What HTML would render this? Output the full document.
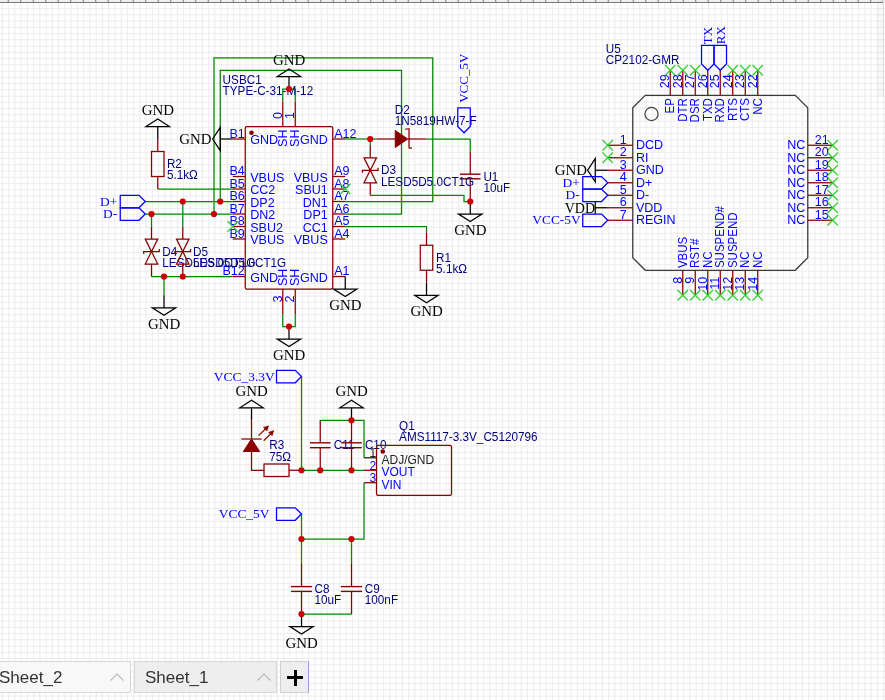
<!DOCTYPE html>
<html><head><meta charset="utf-8"><style>
html,body{margin:0;padding:0;width:885px;height:700px;overflow:hidden;background:#fff;}
#c{position:absolute;left:0;top:0;width:885px;height:700px;will-change:transform;}
.tab{will-change:transform;position:absolute;top:661px;height:30px;border:1px solid #d6d6d6;box-sizing:content-box;font-family:"Liberation Sans",sans-serif;font-size:17px;color:#333;}
.t2{left:-2px;width:131px;background:#f8f8f8;}
.t1{left:134px;width:141px;background:#eeeeee;}
.tt{position:absolute;top:5.5px;}
.t2 .tt{left:0px;}
.t1 .tt{left:10px;}
.car{position:absolute;top:10px;}
.t2 .car{left:110px;}
.t1 .car{left:121px;}
.plus{position:absolute;left:280px;top:661px;width:27px;height:30px;border:1px solid #d0d0d0;border-right-color:#9a9ad8;background:#eeeeee;}
.ph{position:absolute;left:6px;top:14px;width:15.5px;height:2.5px;background:#000;}
.pv{position:absolute;left:12.5px;top:8px;width:3px;height:15.5px;background:#000;}
</style></head><body>
<div id="c"><svg width="885" height="700" viewBox="0 0 885 700"><rect width="885" height="700" fill="#ffffff"/><path d="M2.4 0V700 M8.65 0V700 M14.9 0V700 M21.15 0V700 M27.4 0V700 M33.65 0V700 M39.9 0V700 M46.15 0V700 M52.4 0V700 M58.65 0V700 M64.9 0V700 M71.15 0V700 M77.4 0V700 M83.65 0V700 M89.9 0V700 M96.15 0V700 M102.4 0V700 M108.65 0V700 M114.9 0V700 M121.15 0V700 M127.4 0V700 M133.65 0V700 M139.9 0V700 M146.15 0V700 M152.4 0V700 M158.65 0V700 M164.9 0V700 M171.15 0V700 M177.4 0V700 M183.65 0V700 M189.9 0V700 M196.15 0V700 M202.4 0V700 M208.65 0V700 M214.9 0V700 M221.15 0V700 M227.4 0V700 M233.65 0V700 M239.9 0V700 M246.15 0V700 M252.4 0V700 M258.65 0V700 M264.9 0V700 M271.15 0V700 M277.4 0V700 M283.65 0V700 M289.9 0V700 M296.15 0V700 M302.4 0V700 M308.65 0V700 M314.9 0V700 M321.15 0V700 M327.4 0V700 M333.65 0V700 M339.9 0V700 M346.15 0V700 M352.4 0V700 M358.65 0V700 M364.9 0V700 M371.15 0V700 M377.4 0V700 M383.65 0V700 M389.9 0V700 M396.15 0V700 M402.4 0V700 M408.65 0V700 M414.9 0V700 M421.15 0V700 M427.4 0V700 M433.65 0V700 M439.9 0V700 M446.15 0V700 M452.4 0V700 M458.65 0V700 M464.9 0V700 M471.15 0V700 M477.4 0V700 M483.65 0V700 M489.9 0V700 M496.15 0V700 M502.4 0V700 M508.65 0V700 M514.9 0V700 M521.15 0V700 M527.4 0V700 M533.65 0V700 M539.9 0V700 M546.15 0V700 M552.4 0V700 M558.65 0V700 M564.9 0V700 M571.15 0V700 M577.4 0V700 M583.65 0V700 M589.9 0V700 M596.15 0V700 M602.4 0V700 M608.65 0V700 M614.9 0V700 M621.15 0V700 M627.4 0V700 M633.65 0V700 M639.9 0V700 M646.15 0V700 M652.4 0V700 M658.65 0V700 M664.9 0V700 M671.15 0V700 M677.4 0V700 M683.65 0V700 M689.9 0V700 M696.15 0V700 M702.4 0V700 M708.65 0V700 M714.9 0V700 M721.15 0V700 M727.4 0V700 M733.65 0V700 M739.9 0V700 M746.15 0V700 M752.4 0V700 M758.65 0V700 M764.9 0V700 M771.15 0V700 M777.4 0V700 M783.65 0V700 M789.9 0V700 M796.15 0V700 M802.4 0V700 M808.65 0V700 M814.9 0V700 M821.15 0V700 M827.4 0V700 M833.65 0V700 M839.9 0V700 M846.15 0V700 M852.4 0V700 M858.65 0V700 M864.9 0V700 M871.15 0V700 M877.4 0V700 M883.65 0V700 M0 2.3H885 M0 8.55H885 M0 14.8H885 M0 21.05H885 M0 27.3H885 M0 33.55H885 M0 39.8H885 M0 46.05H885 M0 52.3H885 M0 58.55H885 M0 64.8H885 M0 71.05H885 M0 77.3H885 M0 83.55H885 M0 89.8H885 M0 96.05H885 M0 102.3H885 M0 108.55H885 M0 114.8H885 M0 121.05H885 M0 127.3H885 M0 133.55H885 M0 139.8H885 M0 146.05H885 M0 152.3H885 M0 158.55H885 M0 164.8H885 M0 171.05H885 M0 177.3H885 M0 183.55H885 M0 189.8H885 M0 196.05H885 M0 202.3H885 M0 208.55H885 M0 214.8H885 M0 221.05H885 M0 227.3H885 M0 233.55H885 M0 239.8H885 M0 246.05H885 M0 252.3H885 M0 258.55H885 M0 264.8H885 M0 271.05H885 M0 277.3H885 M0 283.55H885 M0 289.8H885 M0 296.05H885 M0 302.3H885 M0 308.55H885 M0 314.8H885 M0 321.05H885 M0 327.3H885 M0 333.55H885 M0 339.8H885 M0 346.05H885 M0 352.3H885 M0 358.55H885 M0 364.8H885 M0 371.05H885 M0 377.3H885 M0 383.55H885 M0 389.8H885 M0 396.05H885 M0 402.3H885 M0 408.55H885 M0 414.8H885 M0 421.05H885 M0 427.3H885 M0 433.55H885 M0 439.8H885 M0 446.05H885 M0 452.3H885 M0 458.55H885 M0 464.8H885 M0 471.05H885 M0 477.3H885 M0 483.55H885 M0 489.8H885 M0 496.05H885 M0 502.3H885 M0 508.55H885 M0 514.8H885 M0 521.05H885 M0 527.3H885 M0 533.55H885 M0 539.8H885 M0 546.05H885 M0 552.3H885 M0 558.55H885 M0 564.8H885 M0 571.05H885 M0 577.3H885 M0 583.55H885 M0 589.8H885 M0 596.05H885 M0 602.3H885 M0 608.55H885 M0 614.8H885 M0 621.05H885 M0 627.3H885 M0 633.55H885 M0 639.8H885 M0 646.05H885 M0 652.3H885 M0 658.55H885 M0 664.8H885 M0 671.05H885 M0 677.3H885 M0 683.55H885 M0 689.8H885 M0 696.05H885" stroke="#eaeaea" stroke-width="0.9" fill="none"/><rect x="0" y="0" width="883" height="2" fill="#eef0ee"/><line x1="0" y1="2.5" x2="883" y2="2.5" stroke="#7a7a7a" stroke-width="1"/><path d="M8.25 0V2.5 M20.75 0V2.5 M33.25 0V2.5 M45.75 0V2.5 M58.25 0V2.5 M70.75 0V2.5 M83.25 0V2.5 M95.75 0V2.5 M108.25 0V2.5 M120.75 0V2.5 M133.25 0V2.5 M145.75 0V2.5 M158.25 0V2.5 M170.75 0V2.5 M183.25 0V2.5 M195.75 0V2.5 M208.25 0V2.5 M220.75 0V2.5 M233.25 0V2.5 M245.75 0V2.5 M258.25 0V2.5 M270.75 0V2.5 M283.25 0V2.5 M295.75 0V2.5 M308.25 0V2.5 M320.75 0V2.5 M333.25 0V2.5 M345.75 0V2.5 M358.25 0V2.5 M370.75 0V2.5 M383.25 0V2.5 M395.75 0V2.5 M408.25 0V2.5 M420.75 0V2.5 M433.25 0V2.5 M445.75 0V2.5 M458.25 0V2.5 M470.75 0V2.5 M483.25 0V2.5 M495.75 0V2.5 M508.25 0V2.5 M520.75 0V2.5 M533.25 0V2.5 M545.75 0V2.5 M558.25 0V2.5 M570.75 0V2.5 M583.25 0V2.5 M595.75 0V2.5 M608.25 0V2.5 M620.75 0V2.5 M633.25 0V2.5 M645.75 0V2.5 M658.25 0V2.5 M670.75 0V2.5 M683.25 0V2.5 M695.75 0V2.5 M708.25 0V2.5 M720.75 0V2.5 M733.25 0V2.5 M745.75 0V2.5 M758.25 0V2.5 M770.75 0V2.5 M783.25 0V2.5 M795.75 0V2.5 M808.25 0V2.5 M820.75 0V2.5 M833.25 0V2.5 M845.75 0V2.5 M858.25 0V2.5 M870.75 0V2.5 M883.25 0V2.5" stroke="#7a7a7a" stroke-width="1"/><rect x="877.5" y="0" width="6" height="96.7" fill="#000000" fill-opacity="0.03"/><line x1="883.5" y1="0" x2="883.5" y2="96.7" stroke="#dde2dd" stroke-width="1"/>
<polyline points="282.75,101.5 282.75,89 295.25,89 295.25,101.5" stroke="#008800" stroke-width="1.25" fill="none"/>
<polyline points="282.75,314 282.75,326.5 295.25,326.5 295.25,314" stroke="#008800" stroke-width="1.25" fill="none"/>
<polyline points="157.75,189 232.75,189" stroke="#008800" stroke-width="1.25" fill="none"/>
<polyline points="145.25,201.5 232.75,201.5" stroke="#008800" stroke-width="1.25" fill="none"/>
<polyline points="145.25,214 232.75,214" stroke="#008800" stroke-width="1.25" fill="none"/>
<polyline points="182.75,201.5 182.75,226.5" stroke="#008800" stroke-width="1.25" fill="none"/>
<polyline points="151.5,214 151.5,226.5" stroke="#008800" stroke-width="1.25" fill="none"/>
<polyline points="151.5,276.5 232.75,276.5" stroke="#008800" stroke-width="1.25" fill="none"/>
<polyline points="164,276.5 164,295.25" stroke="#008800" stroke-width="1.25" fill="none"/>
<polyline points="345.25,201.5 432.75,201.5 432.75,57.75 214,57.75 214,214" stroke="#008800" stroke-width="1.25" fill="none"/>
<polyline points="345.25,214 401.5,214 401.5,70.25 220.25,70.25 220.25,201.5" stroke="#008800" stroke-width="1.25" fill="none"/>
<polyline points="345.25,139 376.5,139" stroke="#008800" stroke-width="1.25" fill="none"/>
<polyline points="426.5,139 470.25,139 470.25,151.5" stroke="#008800" stroke-width="1.25" fill="none"/>
<polyline points="370.25,139 370.25,145.25" stroke="#008800" stroke-width="1.25" fill="none"/>
<polyline points="370.25,195.25 464,195.25 464,201.5 470.25,201.5" stroke="#008800" stroke-width="1.25" fill="none"/>
<polyline points="345.25,226.5 426.5,226.5 426.5,232.75" stroke="#008800" stroke-width="1.25" fill="none"/>
<polyline points="301.5,376.5 301.5,470.25" stroke="#008800" stroke-width="1.25" fill="none"/>
<polyline points="301.5,470.25 364,470.25" stroke="#008800" stroke-width="1.25" fill="none"/>
<polyline points="320.25,420.25 364,420.25 364,457.75" stroke="#008800" stroke-width="1.25" fill="none"/>
<polyline points="364,482.75 364,539 301.5,539" stroke="#008800" stroke-width="1.25" fill="none"/>
<polyline points="301.5,514 301.5,539" stroke="#008800" stroke-width="1.25" fill="none"/>
<polyline points="301.5,539 301.5,564" stroke="#008800" stroke-width="1.25" fill="none"/>
<polyline points="351.5,539 351.5,564" stroke="#008800" stroke-width="1.25" fill="none"/>
<polyline points="351.5,614 301.5,614" stroke="#008800" stroke-width="1.25" fill="none"/>
<rect x="245.25" y="126.5" width="87.5" height="162.5" rx="1.6" stroke="#880000" stroke-width="1.25" fill="none"/>
<circle cx="251.5" cy="132.75" r="2.3" fill="#880000"/>
<line x1="232.75" y1="139" x2="245.25" y2="139" stroke="#880000" stroke-width="1.25"/>
<text transform="translate(244.75,137.5) scale(0.98,1)" fill="#0000ff" font-size="12.8" font-family='"Liberation Sans", sans-serif' text-anchor="end">B1</text>
<text transform="translate(250.25,144) scale(0.98,1)" fill="#0000ff" font-size="12.8" font-family='"Liberation Sans", sans-serif' text-anchor="start">GND</text>
<line x1="232.75" y1="176.5" x2="245.25" y2="176.5" stroke="#880000" stroke-width="1.25"/>
<text transform="translate(244.75,175) scale(0.98,1)" fill="#0000ff" font-size="12.8" font-family='"Liberation Sans", sans-serif' text-anchor="end">B4</text>
<text transform="translate(250.25,181.5) scale(0.98,1)" fill="#0000ff" font-size="12.8" font-family='"Liberation Sans", sans-serif' text-anchor="start">VBUS</text>
<line x1="232.75" y1="189" x2="245.25" y2="189" stroke="#880000" stroke-width="1.25"/>
<text transform="translate(244.75,187.5) scale(0.98,1)" fill="#0000ff" font-size="12.8" font-family='"Liberation Sans", sans-serif' text-anchor="end">B5</text>
<text transform="translate(250.25,194) scale(0.98,1)" fill="#0000ff" font-size="12.8" font-family='"Liberation Sans", sans-serif' text-anchor="start">CC2</text>
<line x1="232.75" y1="201.5" x2="245.25" y2="201.5" stroke="#880000" stroke-width="1.25"/>
<text transform="translate(244.75,200) scale(0.98,1)" fill="#0000ff" font-size="12.8" font-family='"Liberation Sans", sans-serif' text-anchor="end">B6</text>
<text transform="translate(250.25,206.5) scale(0.98,1)" fill="#0000ff" font-size="12.8" font-family='"Liberation Sans", sans-serif' text-anchor="start">DP2</text>
<line x1="232.75" y1="214" x2="245.25" y2="214" stroke="#880000" stroke-width="1.25"/>
<text transform="translate(244.75,212.5) scale(0.98,1)" fill="#0000ff" font-size="12.8" font-family='"Liberation Sans", sans-serif' text-anchor="end">B7</text>
<text transform="translate(250.25,219) scale(0.98,1)" fill="#0000ff" font-size="12.8" font-family='"Liberation Sans", sans-serif' text-anchor="start">DN2</text>
<line x1="232.75" y1="226.5" x2="245.25" y2="226.5" stroke="#880000" stroke-width="1.25"/>
<text transform="translate(244.75,225) scale(0.98,1)" fill="#0000ff" font-size="12.8" font-family='"Liberation Sans", sans-serif' text-anchor="end">B8</text>
<text transform="translate(250.25,231.5) scale(0.98,1)" fill="#0000ff" font-size="12.8" font-family='"Liberation Sans", sans-serif' text-anchor="start">SBU2</text>
<line x1="232.75" y1="239" x2="245.25" y2="239" stroke="#880000" stroke-width="1.25"/>
<text transform="translate(244.75,237.5) scale(0.98,1)" fill="#0000ff" font-size="12.8" font-family='"Liberation Sans", sans-serif' text-anchor="end">B9</text>
<text transform="translate(250.25,244) scale(0.98,1)" fill="#0000ff" font-size="12.8" font-family='"Liberation Sans", sans-serif' text-anchor="start">VBUS</text>
<line x1="232.75" y1="276.5" x2="245.25" y2="276.5" stroke="#880000" stroke-width="1.25"/>
<text transform="translate(244.75,275) scale(0.98,1)" fill="#0000ff" font-size="12.8" font-family='"Liberation Sans", sans-serif' text-anchor="end">B12</text>
<text transform="translate(250.25,281.5) scale(0.98,1)" fill="#0000ff" font-size="12.8" font-family='"Liberation Sans", sans-serif' text-anchor="start">GND</text>
<line x1="332.75" y1="139" x2="345.25" y2="139" stroke="#880000" stroke-width="1.25"/>
<text transform="translate(334.25,137.5) scale(0.98,1)" fill="#0000ff" font-size="12.8" font-family='"Liberation Sans", sans-serif' text-anchor="start">A12</text>
<text transform="translate(327.75,144.2) scale(0.98,1)" fill="#0000ff" font-size="12.8" font-family='"Liberation Sans", sans-serif' text-anchor="end">GND</text>
<line x1="332.75" y1="176.5" x2="345.25" y2="176.5" stroke="#880000" stroke-width="1.25"/>
<text transform="translate(334.25,175) scale(0.98,1)" fill="#0000ff" font-size="12.8" font-family='"Liberation Sans", sans-serif' text-anchor="start">A9</text>
<text transform="translate(327.75,181.7) scale(0.98,1)" fill="#0000ff" font-size="12.8" font-family='"Liberation Sans", sans-serif' text-anchor="end">VBUS</text>
<line x1="332.75" y1="189" x2="345.25" y2="189" stroke="#880000" stroke-width="1.25"/>
<text transform="translate(334.25,187.5) scale(0.98,1)" fill="#0000ff" font-size="12.8" font-family='"Liberation Sans", sans-serif' text-anchor="start">A8</text>
<text transform="translate(327.75,194.2) scale(0.98,1)" fill="#0000ff" font-size="12.8" font-family='"Liberation Sans", sans-serif' text-anchor="end">SBU1</text>
<line x1="332.75" y1="201.5" x2="345.25" y2="201.5" stroke="#880000" stroke-width="1.25"/>
<text transform="translate(334.25,200) scale(0.98,1)" fill="#0000ff" font-size="12.8" font-family='"Liberation Sans", sans-serif' text-anchor="start">A7</text>
<text transform="translate(327.75,206.7) scale(0.98,1)" fill="#0000ff" font-size="12.8" font-family='"Liberation Sans", sans-serif' text-anchor="end">DN1</text>
<line x1="332.75" y1="214" x2="345.25" y2="214" stroke="#880000" stroke-width="1.25"/>
<text transform="translate(334.25,212.5) scale(0.98,1)" fill="#0000ff" font-size="12.8" font-family='"Liberation Sans", sans-serif' text-anchor="start">A6</text>
<text transform="translate(327.75,219.2) scale(0.98,1)" fill="#0000ff" font-size="12.8" font-family='"Liberation Sans", sans-serif' text-anchor="end">DP1</text>
<line x1="332.75" y1="226.5" x2="345.25" y2="226.5" stroke="#880000" stroke-width="1.25"/>
<text transform="translate(334.25,225) scale(0.98,1)" fill="#0000ff" font-size="12.8" font-family='"Liberation Sans", sans-serif' text-anchor="start">A5</text>
<text transform="translate(327.75,231.7) scale(0.98,1)" fill="#0000ff" font-size="12.8" font-family='"Liberation Sans", sans-serif' text-anchor="end">CC1</text>
<line x1="332.75" y1="239" x2="345.25" y2="239" stroke="#880000" stroke-width="1.25"/>
<text transform="translate(334.25,237.5) scale(0.98,1)" fill="#0000ff" font-size="12.8" font-family='"Liberation Sans", sans-serif' text-anchor="start">A4</text>
<text transform="translate(327.75,244.2) scale(0.98,1)" fill="#0000ff" font-size="12.8" font-family='"Liberation Sans", sans-serif' text-anchor="end">VBUS</text>
<line x1="332.75" y1="276.5" x2="345.25" y2="276.5" stroke="#880000" stroke-width="1.25"/>
<text transform="translate(334.25,275) scale(0.98,1)" fill="#0000ff" font-size="12.8" font-family='"Liberation Sans", sans-serif' text-anchor="start">A1</text>
<text transform="translate(327.75,281.7) scale(0.98,1)" fill="#0000ff" font-size="12.8" font-family='"Liberation Sans", sans-serif' text-anchor="end">GND</text>
<line x1="282.75" y1="101.5" x2="282.75" y2="126.5" stroke="#880000" stroke-width="1.25"/>
<text transform="translate(281.55,119) rotate(-90) scale(0.98,1)" fill="#0000ff" font-size="12.8" font-family='"Liberation Sans", sans-serif' text-anchor="start">0</text>
<text transform="translate(286.65,129.5) rotate(-90) scale(0.98,1)" fill="#0000ff" font-size="12.8" font-family='"Liberation Sans", sans-serif' text-anchor="end">SH</text>
<line x1="295.25" y1="101.5" x2="295.25" y2="126.5" stroke="#880000" stroke-width="1.25"/>
<text transform="translate(294.05,119) rotate(-90) scale(0.98,1)" fill="#0000ff" font-size="12.8" font-family='"Liberation Sans", sans-serif' text-anchor="start">1</text>
<text transform="translate(299.15,129.5) rotate(-90) scale(0.98,1)" fill="#0000ff" font-size="12.8" font-family='"Liberation Sans", sans-serif' text-anchor="end">SH</text>
<line x1="282.75" y1="289" x2="282.75" y2="314" stroke="#880000" stroke-width="1.25"/>
<text transform="translate(281.55,295.5) rotate(-90) scale(0.98,1)" fill="#0000ff" font-size="12.8" font-family='"Liberation Sans", sans-serif' text-anchor="end">3</text>
<text transform="translate(286.65,286) rotate(-90) scale(0.98,1)" fill="#0000ff" font-size="12.8" font-family='"Liberation Sans", sans-serif' text-anchor="start">SH</text>
<line x1="295.25" y1="289" x2="295.25" y2="314" stroke="#880000" stroke-width="1.25"/>
<text transform="translate(294.05,295.5) rotate(-90) scale(0.98,1)" fill="#0000ff" font-size="12.8" font-family='"Liberation Sans", sans-serif' text-anchor="end">2</text>
<text transform="translate(299.15,286) rotate(-90) scale(0.98,1)" fill="#0000ff" font-size="12.8" font-family='"Liberation Sans", sans-serif' text-anchor="start">SH</text>
<text transform="translate(222.6,84.4) scale(0.937,1)" fill="#000080" font-size="12.531" font-family='"Liberation Sans", sans-serif' text-anchor="start">USBC1</text>
<text transform="translate(222.6,95.2) scale(0.937,1)" fill="#000080" font-size="12.531" font-family='"Liberation Sans", sans-serif' text-anchor="start">TYPE-C-31-M-12</text>
<line x1="289" y1="89" x2="289" y2="76.5" stroke="#000000" stroke-width="1.25"/>
<polygon points="277.3,76.5 300.7,76.5 289,68.9" stroke="#000000" stroke-width="1.25" fill="none"/>
<text transform="translate(289,64.5)" fill="#000000" font-size="14.9" font-family='"Liberation Serif", serif' text-anchor="middle">GND</text>
<line x1="289" y1="326.5" x2="289" y2="339" stroke="#000000" stroke-width="1.25"/>
<polygon points="277.3,339 300.7,339 289,346.6" stroke="#000000" stroke-width="1.25" fill="none"/>
<text transform="translate(289,360.2)" fill="#000000" font-size="14.9" font-family='"Liberation Serif", serif' text-anchor="middle">GND</text>
<line x1="232.75" y1="139" x2="220.25" y2="139" stroke="#000000" stroke-width="1.25"/>
<polygon points="220.25,127.3 220.25,150.7 212.65,139" stroke="#000000" stroke-width="1.25" fill="none"/>
<text transform="translate(211.45,143.6)" fill="#000000" font-size="14.9" font-family='"Liberation Serif", serif' text-anchor="end">GND</text>
<line x1="345.25" y1="276.5" x2="345.25" y2="289" stroke="#000000" stroke-width="1.25"/>
<polygon points="333.55,289 356.95,289 345.25,296.6" stroke="#000000" stroke-width="1.25" fill="none"/>
<text transform="translate(345.25,310.2)" fill="#000000" font-size="14.9" font-family='"Liberation Serif", serif' text-anchor="middle">GND</text>
<line x1="157.75" y1="139" x2="157.75" y2="151.5" stroke="#880000" stroke-width="1.25"/>
<rect x="151.5" y="151.5" width="12.5" height="25" stroke="#880000" stroke-width="1.25" fill="none"/>
<line x1="157.75" y1="176.5" x2="157.75" y2="189" stroke="#880000" stroke-width="1.25"/>
<line x1="157.75" y1="139" x2="157.75" y2="126.5" stroke="#000000" stroke-width="1.25"/>
<polygon points="146.05,126.5 169.45,126.5 157.75,118.9" stroke="#000000" stroke-width="1.25" fill="none"/>
<text transform="translate(157.75,114.5)" fill="#000000" font-size="14.9" font-family='"Liberation Serif", serif' text-anchor="middle">GND</text>
<text transform="translate(166.9,168.4) scale(0.937,1)" fill="#000080" font-size="12.531" font-family='"Liberation Sans", sans-serif' text-anchor="start">R2</text>
<text transform="translate(166.9,179.2) scale(0.937,1)" fill="#000080" font-size="12.531" font-family='"Liberation Sans", sans-serif' text-anchor="start">5.1kΩ</text>
<polygon points="145.25,201.5 139,195.25 120.25,195.25 120.25,207.75 139,207.75" stroke="#0000ff" stroke-width="1.25" fill="none"/>
<text transform="translate(117.25,205.7)" fill="#0000ff" font-size="13.45" font-family='"Liberation Serif", serif' text-anchor="end">D+</text>
<polygon points="145.25,214 139,207.75 120.25,207.75 120.25,220.25 139,220.25" stroke="#0000ff" stroke-width="1.25" fill="none"/>
<text transform="translate(117.25,218.2)" fill="#0000ff" font-size="13.45" font-family='"Liberation Serif", serif' text-anchor="end">D-</text>
<line x1="151.5" y1="226.5" x2="151.5" y2="239" stroke="#880000" stroke-width="1.25"/>
<polygon points="145.25,239 157.75,239 151.5,251.5" stroke="#880000" stroke-width="1.25" fill="none"/>
<polygon points="145.25,264 157.75,264 151.5,251.5" stroke="#880000" stroke-width="1.25" fill="none"/>
<polyline points="143.7,254 143.7,251.5 159.3,251.5 159.3,249" stroke="#880000" stroke-width="1.25" fill="none" stroke-linejoin="miter"/>
<line x1="151.5" y1="264" x2="151.5" y2="276.5" stroke="#880000" stroke-width="1.25"/>
<text transform="translate(162.3,255.6) scale(0.937,1)" fill="#000080" font-size="12.531" font-family='"Liberation Sans", sans-serif' text-anchor="start">D4</text>
<text transform="translate(162.3,267) scale(0.937,1)" fill="#000080" font-size="12.531" font-family='"Liberation Sans", sans-serif' text-anchor="start">LESD5D5.0CT1G</text>
<line x1="182.75" y1="226.5" x2="182.75" y2="239" stroke="#880000" stroke-width="1.25"/>
<polygon points="176.5,239 189,239 182.75,251.5" stroke="#880000" stroke-width="1.25" fill="none"/>
<polygon points="176.5,264 189,264 182.75,251.5" stroke="#880000" stroke-width="1.25" fill="none"/>
<polyline points="174.95,254 174.95,251.5 190.55,251.5 190.55,249" stroke="#880000" stroke-width="1.25" fill="none" stroke-linejoin="miter"/>
<line x1="182.75" y1="264" x2="182.75" y2="276.5" stroke="#880000" stroke-width="1.25"/>
<text transform="translate(193,255.6) scale(0.937,1)" fill="#000080" font-size="12.531" font-family='"Liberation Sans", sans-serif' text-anchor="start">D5</text>
<text transform="translate(193,267) scale(0.937,1)" fill="#000080" font-size="12.531" font-family='"Liberation Sans", sans-serif' text-anchor="start">LESD5D5.0CT1G</text>
<line x1="164" y1="295.25" x2="164" y2="307.75" stroke="#000000" stroke-width="1.25"/>
<polygon points="152.3,307.75 175.7,307.75 164,315.35" stroke="#000000" stroke-width="1.25" fill="none"/>
<text transform="translate(164,328.95)" fill="#000000" font-size="14.9" font-family='"Liberation Serif", serif' text-anchor="middle">GND</text>
<line x1="227.55" y1="221.3" x2="237.95" y2="231.7" stroke="#33cc33" stroke-width="1.25"/>
<line x1="227.55" y1="231.7" x2="237.95" y2="221.3" stroke="#33cc33" stroke-width="1.25"/>
<line x1="340.05" y1="183.8" x2="350.45" y2="194.2" stroke="#33cc33" stroke-width="1.25"/>
<line x1="340.05" y1="194.2" x2="350.45" y2="183.8" stroke="#33cc33" stroke-width="1.25"/>
<line x1="376.5" y1="139" x2="395.25" y2="139" stroke="#880000" stroke-width="1.25"/>
<polygon points="395.25,130.5 395.25,147.5 407.75,139" stroke="#880000" stroke-width="1.0" fill="#880000"/>
<path d="M 405.15 129.4 Q 405.15 128.8 409.05 128.8 L 409.05 147.8 Q 409.05 148.4 412.05 147.8" stroke="#880000" stroke-width="1.25" fill="none"/>
<line x1="407.75" y1="139" x2="426.5" y2="139" stroke="#880000" stroke-width="1.25"/>
<text transform="translate(394.8,114.4) scale(0.937,1)" fill="#000080" font-size="12.531" font-family='"Liberation Sans", sans-serif' text-anchor="start">D2</text>
<text transform="translate(394.8,124.7) scale(0.937,1)" fill="#000080" font-size="12.531" font-family='"Liberation Sans", sans-serif' text-anchor="start">1N5819HW-7-F</text>
<line x1="470.25" y1="151.5" x2="470.25" y2="174.2" stroke="#880000" stroke-width="1.25"/>
<line x1="459.95" y1="174.2" x2="480.55" y2="174.2" stroke="#880000" stroke-width="1.4"/>
<line x1="459.95" y1="178.8" x2="480.55" y2="178.8" stroke="#880000" stroke-width="1.4"/>
<line x1="470.25" y1="178.8" x2="470.25" y2="201.5" stroke="#880000" stroke-width="1.25"/>
<line x1="470.25" y1="201.5" x2="470.25" y2="214" stroke="#000000" stroke-width="1.25"/>
<polygon points="458.55,214 481.95,214 470.25,221.6" stroke="#000000" stroke-width="1.25" fill="none"/>
<text transform="translate(470.25,235.2)" fill="#000000" font-size="14.9" font-family='"Liberation Serif", serif' text-anchor="middle">GND</text>
<text transform="translate(483.4,180.8) scale(0.937,1)" fill="#000080" font-size="12.531" font-family='"Liberation Sans", sans-serif' text-anchor="start">U1</text>
<text transform="translate(483.4,191.5) scale(0.937,1)" fill="#000080" font-size="12.531" font-family='"Liberation Sans", sans-serif' text-anchor="start">10uF</text>
<line x1="370.25" y1="145.25" x2="370.25" y2="157.75" stroke="#880000" stroke-width="1.25"/>
<polygon points="364,157.75 376.5,157.75 370.25,170.25" stroke="#880000" stroke-width="1.25" fill="none"/>
<polygon points="364,182.75 376.5,182.75 370.25,170.25" stroke="#880000" stroke-width="1.25" fill="none"/>
<polyline points="362.45,172.75 362.45,170.25 378.05,170.25 378.05,167.75" stroke="#880000" stroke-width="1.25" fill="none" stroke-linejoin="miter"/>
<line x1="370.25" y1="182.75" x2="370.25" y2="195.25" stroke="#880000" stroke-width="1.25"/>
<text transform="translate(381,173.9) scale(0.937,1)" fill="#000080" font-size="12.531" font-family='"Liberation Sans", sans-serif' text-anchor="start">D3</text>
<text transform="translate(381,185.8) scale(0.937,1)" fill="#000080" font-size="12.531" font-family='"Liberation Sans", sans-serif' text-anchor="start">LESD5D5.0CT1G</text>
<polygon points="464,132.75 457.75,126.5 457.75,107.75 470.25,107.75 470.25,126.5" stroke="#0000ff" stroke-width="1.25" fill="none"/>
<text transform="translate(468.4,102.85) rotate(-90)" fill="#0000ff" font-size="13.0" font-family='"Liberation Serif", serif' text-anchor="start">VCC_5V</text>
<line x1="426.5" y1="232.75" x2="426.5" y2="245.25" stroke="#880000" stroke-width="1.25"/>
<rect x="420.25" y="245.25" width="12.5" height="25" stroke="#880000" stroke-width="1.25" fill="none"/>
<line x1="426.5" y1="270.25" x2="426.5" y2="282.75" stroke="#880000" stroke-width="1.25"/>
<line x1="426.5" y1="282.75" x2="426.5" y2="295.25" stroke="#000000" stroke-width="1.25"/>
<polygon points="414.8,295.25 438.2,295.25 426.5,302.85" stroke="#000000" stroke-width="1.25" fill="none"/>
<text transform="translate(426.5,316.45)" fill="#000000" font-size="14.9" font-family='"Liberation Serif", serif' text-anchor="middle">GND</text>
<text transform="translate(436.1,262.1) scale(0.937,1)" fill="#000080" font-size="12.531" font-family='"Liberation Sans", sans-serif' text-anchor="start">R1</text>
<text transform="translate(436.1,273.2) scale(0.937,1)" fill="#000080" font-size="12.531" font-family='"Liberation Sans", sans-serif' text-anchor="start">5.1kΩ</text>
<polygon points="645.25,95.25 795.25,95.25 807.75,107.75 807.75,257.75 795.25,270.25 645.25,270.25 632.75,257.75 632.75,107.75" stroke="#3a3a3a" stroke-width="1.25" fill="none"/>
<circle cx="651.5" cy="114.0" r="6.6" stroke="#444444" stroke-width="1.25" fill="none"/>
<line x1="670.25" y1="70.25" x2="670.25" y2="95.25" stroke="#880000" stroke-width="1.25"/>
<text transform="translate(674.15,98.1) rotate(-90) scale(0.9,1)" fill="#0000ff" font-size="12.8" font-family='"Liberation Sans", sans-serif' text-anchor="end">EP</text>
<text transform="translate(669.05,88.25) rotate(-90) scale(0.98,1)" fill="#0000ff" font-size="12.8" font-family='"Liberation Sans", sans-serif' text-anchor="start">29</text>
<line x1="665.05" y1="65.05" x2="675.45" y2="75.45" stroke="#33cc33" stroke-width="1.25"/>
<line x1="665.05" y1="75.45" x2="675.45" y2="65.05" stroke="#33cc33" stroke-width="1.25"/>
<line x1="682.75" y1="70.25" x2="682.75" y2="95.25" stroke="#880000" stroke-width="1.25"/>
<text transform="translate(686.65,98.1) rotate(-90) scale(0.9,1)" fill="#0000ff" font-size="12.8" font-family='"Liberation Sans", sans-serif' text-anchor="end">DTR</text>
<text transform="translate(681.55,88.25) rotate(-90) scale(0.98,1)" fill="#0000ff" font-size="12.8" font-family='"Liberation Sans", sans-serif' text-anchor="start">28</text>
<line x1="677.55" y1="65.05" x2="687.95" y2="75.45" stroke="#33cc33" stroke-width="1.25"/>
<line x1="677.55" y1="75.45" x2="687.95" y2="65.05" stroke="#33cc33" stroke-width="1.25"/>
<line x1="695.25" y1="70.25" x2="695.25" y2="95.25" stroke="#880000" stroke-width="1.25"/>
<text transform="translate(699.15,98.1) rotate(-90) scale(0.9,1)" fill="#0000ff" font-size="12.8" font-family='"Liberation Sans", sans-serif' text-anchor="end">DSR</text>
<text transform="translate(694.05,88.25) rotate(-90) scale(0.98,1)" fill="#0000ff" font-size="12.8" font-family='"Liberation Sans", sans-serif' text-anchor="start">27</text>
<line x1="690.05" y1="65.05" x2="700.45" y2="75.45" stroke="#33cc33" stroke-width="1.25"/>
<line x1="690.05" y1="75.45" x2="700.45" y2="65.05" stroke="#33cc33" stroke-width="1.25"/>
<line x1="707.75" y1="70.25" x2="707.75" y2="95.25" stroke="#880000" stroke-width="1.25"/>
<text transform="translate(711.65,98.1) rotate(-90) scale(0.9,1)" fill="#0000ff" font-size="12.8" font-family='"Liberation Sans", sans-serif' text-anchor="end">TXD</text>
<text transform="translate(706.55,88.25) rotate(-90) scale(0.98,1)" fill="#0000ff" font-size="12.8" font-family='"Liberation Sans", sans-serif' text-anchor="start">26</text>
<line x1="720.25" y1="70.25" x2="720.25" y2="95.25" stroke="#880000" stroke-width="1.25"/>
<text transform="translate(724.15,98.1) rotate(-90) scale(0.9,1)" fill="#0000ff" font-size="12.8" font-family='"Liberation Sans", sans-serif' text-anchor="end">RXD</text>
<text transform="translate(719.05,88.25) rotate(-90) scale(0.98,1)" fill="#0000ff" font-size="12.8" font-family='"Liberation Sans", sans-serif' text-anchor="start">25</text>
<line x1="732.75" y1="70.25" x2="732.75" y2="95.25" stroke="#880000" stroke-width="1.25"/>
<text transform="translate(736.65,98.1) rotate(-90) scale(0.9,1)" fill="#0000ff" font-size="12.8" font-family='"Liberation Sans", sans-serif' text-anchor="end">RTS</text>
<text transform="translate(731.55,88.25) rotate(-90) scale(0.98,1)" fill="#0000ff" font-size="12.8" font-family='"Liberation Sans", sans-serif' text-anchor="start">24</text>
<line x1="727.55" y1="65.05" x2="737.95" y2="75.45" stroke="#33cc33" stroke-width="1.25"/>
<line x1="727.55" y1="75.45" x2="737.95" y2="65.05" stroke="#33cc33" stroke-width="1.25"/>
<line x1="745.25" y1="70.25" x2="745.25" y2="95.25" stroke="#880000" stroke-width="1.25"/>
<text transform="translate(749.15,98.1) rotate(-90) scale(0.9,1)" fill="#0000ff" font-size="12.8" font-family='"Liberation Sans", sans-serif' text-anchor="end">CTS</text>
<text transform="translate(744.05,88.25) rotate(-90) scale(0.98,1)" fill="#0000ff" font-size="12.8" font-family='"Liberation Sans", sans-serif' text-anchor="start">23</text>
<line x1="740.05" y1="65.05" x2="750.45" y2="75.45" stroke="#33cc33" stroke-width="1.25"/>
<line x1="740.05" y1="75.45" x2="750.45" y2="65.05" stroke="#33cc33" stroke-width="1.25"/>
<line x1="757.75" y1="70.25" x2="757.75" y2="95.25" stroke="#880000" stroke-width="1.25"/>
<text transform="translate(761.65,98.1) rotate(-90) scale(0.9,1)" fill="#0000ff" font-size="12.8" font-family='"Liberation Sans", sans-serif' text-anchor="end">NC</text>
<text transform="translate(756.55,88.25) rotate(-90) scale(0.98,1)" fill="#0000ff" font-size="12.8" font-family='"Liberation Sans", sans-serif' text-anchor="start">22</text>
<line x1="752.55" y1="65.05" x2="762.95" y2="75.45" stroke="#33cc33" stroke-width="1.25"/>
<line x1="752.55" y1="75.45" x2="762.95" y2="65.05" stroke="#33cc33" stroke-width="1.25"/>
<polygon points="707.75,70.25 701.5,64 701.5,45.25 714,45.25 714,64" stroke="#0000ff" stroke-width="1.25" fill="none"/>
<text transform="translate(712.15,44.25) rotate(-90)" fill="#0000ff" font-size="13.0" font-family='"Liberation Serif", serif' text-anchor="start">TX</text>
<polygon points="720.25,70.25 714,64 714,45.25 726.5,45.25 726.5,64" stroke="#0000ff" stroke-width="1.25" fill="none"/>
<text transform="translate(724.65,44.25) rotate(-90)" fill="#0000ff" font-size="13.0" font-family='"Liberation Serif", serif' text-anchor="start">RX</text>
<line x1="607.75" y1="145.25" x2="632.75" y2="145.25" stroke="#880000" stroke-width="1.25"/>
<text transform="translate(626.75,143.75) scale(0.98,1)" fill="#0000ff" font-size="12.8" font-family='"Liberation Sans", sans-serif' text-anchor="end">1</text>
<text transform="translate(635.95,149.05) scale(0.98,1)" fill="#0000ff" font-size="12.8" font-family='"Liberation Sans", sans-serif' text-anchor="start">DCD</text>
<line x1="607.75" y1="157.75" x2="632.75" y2="157.75" stroke="#880000" stroke-width="1.25"/>
<text transform="translate(626.75,156.25) scale(0.98,1)" fill="#0000ff" font-size="12.8" font-family='"Liberation Sans", sans-serif' text-anchor="end">2</text>
<text transform="translate(635.95,161.55) scale(0.98,1)" fill="#0000ff" font-size="12.8" font-family='"Liberation Sans", sans-serif' text-anchor="start">RI</text>
<line x1="607.75" y1="170.25" x2="632.75" y2="170.25" stroke="#880000" stroke-width="1.25"/>
<text transform="translate(626.75,168.75) scale(0.98,1)" fill="#0000ff" font-size="12.8" font-family='"Liberation Sans", sans-serif' text-anchor="end">3</text>
<text transform="translate(635.95,174.05) scale(0.98,1)" fill="#0000ff" font-size="12.8" font-family='"Liberation Sans", sans-serif' text-anchor="start">GND</text>
<line x1="607.75" y1="182.75" x2="632.75" y2="182.75" stroke="#880000" stroke-width="1.25"/>
<text transform="translate(626.75,181.25) scale(0.98,1)" fill="#0000ff" font-size="12.8" font-family='"Liberation Sans", sans-serif' text-anchor="end">4</text>
<text transform="translate(635.95,186.55) scale(0.98,1)" fill="#0000ff" font-size="12.8" font-family='"Liberation Sans", sans-serif' text-anchor="start">D+</text>
<line x1="607.75" y1="195.25" x2="632.75" y2="195.25" stroke="#880000" stroke-width="1.25"/>
<text transform="translate(626.75,193.75) scale(0.98,1)" fill="#0000ff" font-size="12.8" font-family='"Liberation Sans", sans-serif' text-anchor="end">5</text>
<text transform="translate(635.95,199.05) scale(0.98,1)" fill="#0000ff" font-size="12.8" font-family='"Liberation Sans", sans-serif' text-anchor="start">D-</text>
<line x1="607.75" y1="207.75" x2="632.75" y2="207.75" stroke="#880000" stroke-width="1.25"/>
<text transform="translate(626.75,206.25) scale(0.98,1)" fill="#0000ff" font-size="12.8" font-family='"Liberation Sans", sans-serif' text-anchor="end">6</text>
<text transform="translate(635.95,211.55) scale(0.98,1)" fill="#0000ff" font-size="12.8" font-family='"Liberation Sans", sans-serif' text-anchor="start">VDD</text>
<line x1="607.75" y1="220.25" x2="632.75" y2="220.25" stroke="#880000" stroke-width="1.25"/>
<text transform="translate(626.75,218.75) scale(0.98,1)" fill="#0000ff" font-size="12.8" font-family='"Liberation Sans", sans-serif' text-anchor="end">7</text>
<text transform="translate(635.95,224.05) scale(0.98,1)" fill="#0000ff" font-size="12.8" font-family='"Liberation Sans", sans-serif' text-anchor="start">REGIN</text>
<line x1="602.55" y1="140.05" x2="612.95" y2="150.45" stroke="#33cc33" stroke-width="1.25"/>
<line x1="602.55" y1="150.45" x2="612.95" y2="140.05" stroke="#33cc33" stroke-width="1.25"/>
<line x1="602.55" y1="152.55" x2="612.95" y2="162.95" stroke="#33cc33" stroke-width="1.25"/>
<line x1="602.55" y1="162.95" x2="612.95" y2="152.55" stroke="#33cc33" stroke-width="1.25"/>
<line x1="607.75" y1="170.25" x2="595.25" y2="170.25" stroke="#000000" stroke-width="1.25"/>
<polygon points="595.25,158.55 595.25,181.95 587.65,170.25" stroke="#000000" stroke-width="1.25" fill="none"/>
<text transform="translate(586.95,174.85)" fill="#000000" font-size="14.9" font-family='"Liberation Serif", serif' text-anchor="end">GND</text>
<polygon points="607.75,182.75 601.5,176.5 582.75,176.5 582.75,189 601.5,189" stroke="#0000ff" stroke-width="1.25" fill="none"/>
<text transform="translate(579.75,186.95)" fill="#0000ff" font-size="13.45" font-family='"Liberation Serif", serif' text-anchor="end">D+</text>
<polygon points="607.75,195.25 601.5,189 582.75,189 582.75,201.5 601.5,201.5" stroke="#0000ff" stroke-width="1.25" fill="none"/>
<text transform="translate(579.75,199.45)" fill="#0000ff" font-size="13.45" font-family='"Liberation Serif", serif' text-anchor="end">D-</text>
<polygon points="607.75,220.25 601.5,214 582.75,214 582.75,226.5 601.5,226.5" stroke="#0000ff" stroke-width="1.25" fill="none"/>
<text transform="translate(580.75,224.45)" fill="#0000ff" font-size="13.45" font-family='"Liberation Serif", serif' text-anchor="end">VCC-5V</text>
<line x1="607.75" y1="207.75" x2="595.25" y2="207.75" stroke="#000000" stroke-width="1.25"/>
<line x1="595.25" y1="201.75" x2="595.25" y2="213.75" stroke="#000000" stroke-width="1.25"/>
<text transform="translate(595,212.5)" fill="#000000" font-size="14.0" font-family='"Liberation Serif", serif' text-anchor="end">VDD</text>
<line x1="807.75" y1="145.25" x2="832.75" y2="145.25" stroke="#880000" stroke-width="1.25"/>
<text transform="translate(805.25,149.05) scale(0.98,1)" fill="#0000ff" font-size="12.8" font-family='"Liberation Sans", sans-serif' text-anchor="end">NC</text>
<text transform="translate(814.75,143.75) scale(0.98,1)" fill="#0000ff" font-size="12.8" font-family='"Liberation Sans", sans-serif' text-anchor="start">21</text>
<line x1="827.55" y1="140.05" x2="837.95" y2="150.45" stroke="#33cc33" stroke-width="1.25"/>
<line x1="827.55" y1="150.45" x2="837.95" y2="140.05" stroke="#33cc33" stroke-width="1.25"/>
<line x1="807.75" y1="157.75" x2="832.75" y2="157.75" stroke="#880000" stroke-width="1.25"/>
<text transform="translate(805.25,161.55) scale(0.98,1)" fill="#0000ff" font-size="12.8" font-family='"Liberation Sans", sans-serif' text-anchor="end">NC</text>
<text transform="translate(814.75,156.25) scale(0.98,1)" fill="#0000ff" font-size="12.8" font-family='"Liberation Sans", sans-serif' text-anchor="start">20</text>
<line x1="827.55" y1="152.55" x2="837.95" y2="162.95" stroke="#33cc33" stroke-width="1.25"/>
<line x1="827.55" y1="162.95" x2="837.95" y2="152.55" stroke="#33cc33" stroke-width="1.25"/>
<line x1="807.75" y1="170.25" x2="832.75" y2="170.25" stroke="#880000" stroke-width="1.25"/>
<text transform="translate(805.25,174.05) scale(0.98,1)" fill="#0000ff" font-size="12.8" font-family='"Liberation Sans", sans-serif' text-anchor="end">NC</text>
<text transform="translate(814.75,168.75) scale(0.98,1)" fill="#0000ff" font-size="12.8" font-family='"Liberation Sans", sans-serif' text-anchor="start">19</text>
<line x1="827.55" y1="165.05" x2="837.95" y2="175.45" stroke="#33cc33" stroke-width="1.25"/>
<line x1="827.55" y1="175.45" x2="837.95" y2="165.05" stroke="#33cc33" stroke-width="1.25"/>
<line x1="807.75" y1="182.75" x2="832.75" y2="182.75" stroke="#880000" stroke-width="1.25"/>
<text transform="translate(805.25,186.55) scale(0.98,1)" fill="#0000ff" font-size="12.8" font-family='"Liberation Sans", sans-serif' text-anchor="end">NC</text>
<text transform="translate(814.75,181.25) scale(0.98,1)" fill="#0000ff" font-size="12.8" font-family='"Liberation Sans", sans-serif' text-anchor="start">18</text>
<line x1="827.55" y1="177.55" x2="837.95" y2="187.95" stroke="#33cc33" stroke-width="1.25"/>
<line x1="827.55" y1="187.95" x2="837.95" y2="177.55" stroke="#33cc33" stroke-width="1.25"/>
<line x1="807.75" y1="195.25" x2="832.75" y2="195.25" stroke="#880000" stroke-width="1.25"/>
<text transform="translate(805.25,199.05) scale(0.98,1)" fill="#0000ff" font-size="12.8" font-family='"Liberation Sans", sans-serif' text-anchor="end">NC</text>
<text transform="translate(814.75,193.75) scale(0.98,1)" fill="#0000ff" font-size="12.8" font-family='"Liberation Sans", sans-serif' text-anchor="start">17</text>
<line x1="827.55" y1="190.05" x2="837.95" y2="200.45" stroke="#33cc33" stroke-width="1.25"/>
<line x1="827.55" y1="200.45" x2="837.95" y2="190.05" stroke="#33cc33" stroke-width="1.25"/>
<line x1="807.75" y1="207.75" x2="832.75" y2="207.75" stroke="#880000" stroke-width="1.25"/>
<text transform="translate(805.25,211.55) scale(0.98,1)" fill="#0000ff" font-size="12.8" font-family='"Liberation Sans", sans-serif' text-anchor="end">NC</text>
<text transform="translate(814.75,206.25) scale(0.98,1)" fill="#0000ff" font-size="12.8" font-family='"Liberation Sans", sans-serif' text-anchor="start">16</text>
<line x1="827.55" y1="202.55" x2="837.95" y2="212.95" stroke="#33cc33" stroke-width="1.25"/>
<line x1="827.55" y1="212.95" x2="837.95" y2="202.55" stroke="#33cc33" stroke-width="1.25"/>
<line x1="807.75" y1="220.25" x2="832.75" y2="220.25" stroke="#880000" stroke-width="1.25"/>
<text transform="translate(805.25,224.05) scale(0.98,1)" fill="#0000ff" font-size="12.8" font-family='"Liberation Sans", sans-serif' text-anchor="end">NC</text>
<text transform="translate(814.75,218.75) scale(0.98,1)" fill="#0000ff" font-size="12.8" font-family='"Liberation Sans", sans-serif' text-anchor="start">15</text>
<line x1="827.55" y1="215.05" x2="837.95" y2="225.45" stroke="#33cc33" stroke-width="1.25"/>
<line x1="827.55" y1="225.45" x2="837.95" y2="215.05" stroke="#33cc33" stroke-width="1.25"/>
<line x1="682.75" y1="270.25" x2="682.75" y2="295.25" stroke="#880000" stroke-width="1.25"/>
<text transform="translate(686.65,268.05) rotate(-90) scale(0.9,1)" fill="#0000ff" font-size="12.8" font-family='"Liberation Sans", sans-serif' text-anchor="start">VBUS</text>
<text transform="translate(681.55,276.75) rotate(-90) scale(0.98,1)" fill="#0000ff" font-size="12.8" font-family='"Liberation Sans", sans-serif' text-anchor="end">8</text>
<line x1="677.55" y1="290.05" x2="687.95" y2="300.45" stroke="#33cc33" stroke-width="1.25"/>
<line x1="677.55" y1="300.45" x2="687.95" y2="290.05" stroke="#33cc33" stroke-width="1.25"/>
<line x1="695.25" y1="270.25" x2="695.25" y2="295.25" stroke="#880000" stroke-width="1.25"/>
<text transform="translate(699.15,268.05) rotate(-90) scale(0.9,1)" fill="#0000ff" font-size="12.8" font-family='"Liberation Sans", sans-serif' text-anchor="start">RST#</text>
<text transform="translate(694.05,276.75) rotate(-90) scale(0.98,1)" fill="#0000ff" font-size="12.8" font-family='"Liberation Sans", sans-serif' text-anchor="end">9</text>
<line x1="690.05" y1="290.05" x2="700.45" y2="300.45" stroke="#33cc33" stroke-width="1.25"/>
<line x1="690.05" y1="300.45" x2="700.45" y2="290.05" stroke="#33cc33" stroke-width="1.25"/>
<line x1="707.75" y1="270.25" x2="707.75" y2="295.25" stroke="#880000" stroke-width="1.25"/>
<text transform="translate(711.65,268.05) rotate(-90) scale(0.9,1)" fill="#0000ff" font-size="12.8" font-family='"Liberation Sans", sans-serif' text-anchor="start">NC</text>
<text transform="translate(706.55,276.75) rotate(-90) scale(0.98,1)" fill="#0000ff" font-size="12.8" font-family='"Liberation Sans", sans-serif' text-anchor="end">10</text>
<line x1="702.55" y1="290.05" x2="712.95" y2="300.45" stroke="#33cc33" stroke-width="1.25"/>
<line x1="702.55" y1="300.45" x2="712.95" y2="290.05" stroke="#33cc33" stroke-width="1.25"/>
<line x1="720.25" y1="270.25" x2="720.25" y2="295.25" stroke="#880000" stroke-width="1.25"/>
<text transform="translate(724.15,268.05) rotate(-90) scale(0.9,1)" fill="#0000ff" font-size="12.8" font-family='"Liberation Sans", sans-serif' text-anchor="start">SUSPEND#</text>
<text transform="translate(719.05,276.75) rotate(-90) scale(0.98,1)" fill="#0000ff" font-size="12.8" font-family='"Liberation Sans", sans-serif' text-anchor="end">11</text>
<line x1="715.05" y1="290.05" x2="725.45" y2="300.45" stroke="#33cc33" stroke-width="1.25"/>
<line x1="715.05" y1="300.45" x2="725.45" y2="290.05" stroke="#33cc33" stroke-width="1.25"/>
<line x1="732.75" y1="270.25" x2="732.75" y2="295.25" stroke="#880000" stroke-width="1.25"/>
<text transform="translate(736.65,268.05) rotate(-90) scale(0.9,1)" fill="#0000ff" font-size="12.8" font-family='"Liberation Sans", sans-serif' text-anchor="start">SUSPEND</text>
<text transform="translate(731.55,276.75) rotate(-90) scale(0.98,1)" fill="#0000ff" font-size="12.8" font-family='"Liberation Sans", sans-serif' text-anchor="end">12</text>
<line x1="727.55" y1="290.05" x2="737.95" y2="300.45" stroke="#33cc33" stroke-width="1.25"/>
<line x1="727.55" y1="300.45" x2="737.95" y2="290.05" stroke="#33cc33" stroke-width="1.25"/>
<line x1="745.25" y1="270.25" x2="745.25" y2="295.25" stroke="#880000" stroke-width="1.25"/>
<text transform="translate(749.15,268.05) rotate(-90) scale(0.9,1)" fill="#0000ff" font-size="12.8" font-family='"Liberation Sans", sans-serif' text-anchor="start">NC</text>
<text transform="translate(744.05,276.75) rotate(-90) scale(0.98,1)" fill="#0000ff" font-size="12.8" font-family='"Liberation Sans", sans-serif' text-anchor="end">13</text>
<line x1="740.05" y1="290.05" x2="750.45" y2="300.45" stroke="#33cc33" stroke-width="1.25"/>
<line x1="740.05" y1="300.45" x2="750.45" y2="290.05" stroke="#33cc33" stroke-width="1.25"/>
<line x1="757.75" y1="270.25" x2="757.75" y2="295.25" stroke="#880000" stroke-width="1.25"/>
<text transform="translate(761.65,268.05) rotate(-90) scale(0.9,1)" fill="#0000ff" font-size="12.8" font-family='"Liberation Sans", sans-serif' text-anchor="start">NC</text>
<text transform="translate(756.55,276.75) rotate(-90) scale(0.98,1)" fill="#0000ff" font-size="12.8" font-family='"Liberation Sans", sans-serif' text-anchor="end">14</text>
<line x1="752.55" y1="290.05" x2="762.95" y2="300.45" stroke="#33cc33" stroke-width="1.25"/>
<line x1="752.55" y1="300.45" x2="762.95" y2="290.05" stroke="#33cc33" stroke-width="1.25"/>
<text transform="translate(605.8,53.1) scale(0.937,1)" fill="#000080" font-size="12.531" font-family='"Liberation Sans", sans-serif' text-anchor="start">U5</text>
<text transform="translate(605.8,64) scale(0.937,1)" fill="#000080" font-size="12.531" font-family='"Liberation Sans", sans-serif' text-anchor="start">CP2102-GMR</text>
<polygon points="301.5,376.5 295.25,370.25 276.5,370.25 276.5,382.75 295.25,382.75" stroke="#0000ff" stroke-width="1.25" fill="none"/>
<text transform="translate(274.7,380.7)" fill="#0000ff" font-size="13.45" font-family='"Liberation Serif", serif' text-anchor="end">VCC_3.3V</text>
<line x1="251.5" y1="420.25" x2="251.5" y2="407.75" stroke="#000000" stroke-width="1.25"/>
<polygon points="239.8,407.75 263.2,407.75 251.5,400.15" stroke="#000000" stroke-width="1.25" fill="none"/>
<text transform="translate(251.5,395.75)" fill="#000000" font-size="14.9" font-family='"Liberation Serif", serif' text-anchor="middle">GND</text>
<line x1="251.5" y1="420.25" x2="251.5" y2="439" stroke="#880000" stroke-width="1.25"/>
<line x1="241.3" y1="439" x2="261.7" y2="439" stroke="#880000" stroke-width="1.25"/>
<polygon points="251.5,439 243.3,451.5 259.7,451.5" stroke="#880000" stroke-width="1.0" fill="#880000"/>
<polyline points="251.5,451.5 251.5,470.25 264,470.25" stroke="#880000" stroke-width="1.25" fill="none" stroke-linejoin="miter"/>
<rect x="264.0" y="464" width="25" height="12.5" stroke="#880000" stroke-width="1.25" fill="none"/>
<line x1="289" y1="470.25" x2="301.5" y2="470.25" stroke="#880000" stroke-width="1.25"/>
<line x1="258.6" y1="435.6" x2="267.1" y2="427.3" stroke="#880000" stroke-width="1.25"/>
<polygon points="268.6,425.8 263.4,427.4 267,431" stroke="#880000" stroke-width="0.5" fill="#880000"/>
<line x1="263.7" y1="440.7" x2="272.3" y2="432.1" stroke="#880000" stroke-width="1.25"/>
<polygon points="273.8,430.6 268.6,432.2 272.2,435.8" stroke="#880000" stroke-width="0.5" fill="#880000"/>
<text transform="translate(269.2,449) scale(0.937,1)" fill="#000080" font-size="12.531" font-family='"Liberation Sans", sans-serif' text-anchor="start">R3</text>
<text transform="translate(269.2,460.5) scale(0.937,1)" fill="#000080" font-size="12.531" font-family='"Liberation Sans", sans-serif' text-anchor="start">75Ω</text>
<line x1="364" y1="470.25" x2="376.5" y2="470.25" stroke="#880000" stroke-width="1.25"/>
<line x1="364" y1="457.75" x2="376.5" y2="457.75" stroke="#222222" stroke-width="1.25"/>
<line x1="320.25" y1="420.25" x2="320.25" y2="442.8" stroke="#880000" stroke-width="1.25"/>
<line x1="309.95" y1="442.8" x2="330.55" y2="442.8" stroke="#880000" stroke-width="1.4"/>
<line x1="309.95" y1="447.7" x2="330.55" y2="447.7" stroke="#880000" stroke-width="1.4"/>
<line x1="320.25" y1="447.7" x2="320.25" y2="470.25" stroke="#880000" stroke-width="1.25"/>
<text transform="translate(333.7,449.2) scale(0.937,1)" fill="#000080" font-size="12.531" font-family='"Liberation Sans", sans-serif' text-anchor="start">C11</text>
<line x1="351.5" y1="420.25" x2="351.5" y2="442.8" stroke="#880000" stroke-width="1.25"/>
<line x1="341.2" y1="442.8" x2="361.8" y2="442.8" stroke="#880000" stroke-width="1.4"/>
<line x1="341.2" y1="447.7" x2="361.8" y2="447.7" stroke="#880000" stroke-width="1.4"/>
<line x1="351.5" y1="447.7" x2="351.5" y2="470.25" stroke="#880000" stroke-width="1.25"/>
<text transform="translate(364.9,449.2) scale(0.937,1)" fill="#000080" font-size="12.531" font-family='"Liberation Sans", sans-serif' text-anchor="start">C10</text>
<line x1="351.5" y1="420.25" x2="351.5" y2="407.75" stroke="#000000" stroke-width="1.25"/>
<polygon points="339.8,407.75 363.2,407.75 351.5,400.15" stroke="#000000" stroke-width="1.25" fill="none"/>
<text transform="translate(351.5,395.75)" fill="#000000" font-size="14.9" font-family='"Liberation Serif", serif' text-anchor="middle">GND</text>
<rect x="376.5" y="445.25" width="75" height="50" rx="1.6" stroke="#880000" stroke-width="1.25" fill="none"/>
<circle cx="382.75" cy="451.5" r="2.3" fill="#880000"/>
<line x1="364" y1="482.75" x2="376.5" y2="482.75" stroke="#880000" stroke-width="1.25"/>
<text transform="translate(376.2,457.05) scale(0.98,1)" fill="#222222" font-size="12.262" font-family='"Liberation Sans", sans-serif' text-anchor="end">1</text>
<text transform="translate(376.2,469.55) scale(0.98,1)" fill="#0000ff" font-size="12.262" font-family='"Liberation Sans", sans-serif' text-anchor="end">2</text>
<text transform="translate(376.2,482.05) scale(0.98,1)" fill="#0000ff" font-size="12.262" font-family='"Liberation Sans", sans-serif' text-anchor="end">3</text>
<text transform="translate(381.5,463.55) scale(0.98,1)" fill="#222222" font-size="12.262" font-family='"Liberation Sans", sans-serif' text-anchor="start">ADJ/GND</text>
<text transform="translate(381.5,476.05) scale(0.98,1)" fill="#0000ff" font-size="12.262" font-family='"Liberation Sans", sans-serif' text-anchor="start">VOUT</text>
<text transform="translate(381.5,488.55) scale(0.98,1)" fill="#0000ff" font-size="12.262" font-family='"Liberation Sans", sans-serif' text-anchor="start">VIN</text>
<text transform="translate(399.1,429.9) scale(0.937,1)" fill="#000080" font-size="12.531" font-family='"Liberation Sans", sans-serif' text-anchor="start">Q1</text>
<text transform="translate(399.1,440.9) scale(0.937,1)" fill="#000080" font-size="12.531" font-family='"Liberation Sans", sans-serif' text-anchor="start">AMS1117-3.3V_C5120796</text>
<polygon points="301.5,514 295.25,507.75 276.5,507.75 276.5,520.25 295.25,520.25" stroke="#0000ff" stroke-width="1.25" fill="none"/>
<text transform="translate(269.5,518.2)" fill="#0000ff" font-size="13.45" font-family='"Liberation Serif", serif' text-anchor="end">VCC_5V</text>
<line x1="301.5" y1="564" x2="301.5" y2="586.6" stroke="#880000" stroke-width="1.25"/>
<line x1="290.9" y1="586.6" x2="312.1" y2="586.6" stroke="#880000" stroke-width="1.4"/>
<line x1="290.9" y1="591.4" x2="312.1" y2="591.4" stroke="#880000" stroke-width="1.4"/>
<line x1="301.5" y1="591.4" x2="301.5" y2="614" stroke="#880000" stroke-width="1.25"/>
<line x1="301.5" y1="614" x2="301.5" y2="626.5" stroke="#000000" stroke-width="1.25"/>
<polygon points="289.8,626.5 313.2,626.5 301.5,634.1" stroke="#000000" stroke-width="1.25" fill="none"/>
<text transform="translate(301.5,647.7)" fill="#000000" font-size="14.9" font-family='"Liberation Serif", serif' text-anchor="middle">GND</text>
<line x1="351.5" y1="564" x2="351.5" y2="586.6" stroke="#880000" stroke-width="1.25"/>
<line x1="340.9" y1="586.6" x2="362.1" y2="586.6" stroke="#880000" stroke-width="1.4"/>
<line x1="340.9" y1="591.4" x2="362.1" y2="591.4" stroke="#880000" stroke-width="1.4"/>
<line x1="351.5" y1="591.4" x2="351.5" y2="614" stroke="#880000" stroke-width="1.25"/>
<text transform="translate(314.5,593.1) scale(0.937,1)" fill="#000080" font-size="12.531" font-family='"Liberation Sans", sans-serif' text-anchor="start">C8</text>
<text transform="translate(314.5,604.3) scale(0.937,1)" fill="#000080" font-size="12.531" font-family='"Liberation Sans", sans-serif' text-anchor="start">10uF</text>
<text transform="translate(364.8,593.1) scale(0.937,1)" fill="#000080" font-size="12.531" font-family='"Liberation Sans", sans-serif' text-anchor="start">C9</text>
<text transform="translate(364.8,604.3) scale(0.937,1)" fill="#000080" font-size="12.531" font-family='"Liberation Sans", sans-serif' text-anchor="start">100nF</text>
<circle cx="289" cy="89" r="3.1" fill="#cc0000"/>
<circle cx="289" cy="326.5" r="3.1" fill="#cc0000"/>
<circle cx="182.75" cy="201.5" r="3.1" fill="#cc0000"/>
<circle cx="220.25" cy="201.5" r="3.1" fill="#cc0000"/>
<circle cx="151.5" cy="214" r="3.1" fill="#cc0000"/>
<circle cx="214" cy="214" r="3.1" fill="#cc0000"/>
<circle cx="164" cy="276.5" r="3.1" fill="#cc0000"/>
<circle cx="182.75" cy="276.5" r="3.1" fill="#cc0000"/>
<circle cx="370.25" cy="139" r="3.1" fill="#cc0000"/>
<circle cx="470.25" cy="201.5" r="3.1" fill="#cc0000"/>
<circle cx="301.5" cy="470.25" r="3.1" fill="#cc0000"/>
<circle cx="320.25" cy="470.25" r="3.1" fill="#cc0000"/>
<circle cx="351.5" cy="470.25" r="3.1" fill="#cc0000"/>
<circle cx="351.5" cy="420.25" r="3.1" fill="#cc0000"/>
<circle cx="301.5" cy="539" r="3.1" fill="#cc0000"/>
<circle cx="351.5" cy="539" r="3.1" fill="#cc0000"/>
<circle cx="301.5" cy="614" r="3.1" fill="#cc0000"/></svg></div>

<div class="tab t2"><span class="tt">Sheet_2</span><svg class="car" width="16" height="10" viewBox="0 0 16 10"><polyline points="1.5,8.5 8,2 14.5,8.5" fill="none" stroke="#bbbbbb" stroke-width="1.2"/></svg></div>
<div class="tab t1"><span class="tt">Sheet_1</span><svg class="car" width="16" height="10" viewBox="0 0 16 10"><polyline points="1.5,8.5 8,2 14.5,8.5" fill="none" stroke="#bbbbbb" stroke-width="1.2"/></svg></div>
<div class="plus"><div class="ph"></div><div class="pv"></div></div>

</body></html>
